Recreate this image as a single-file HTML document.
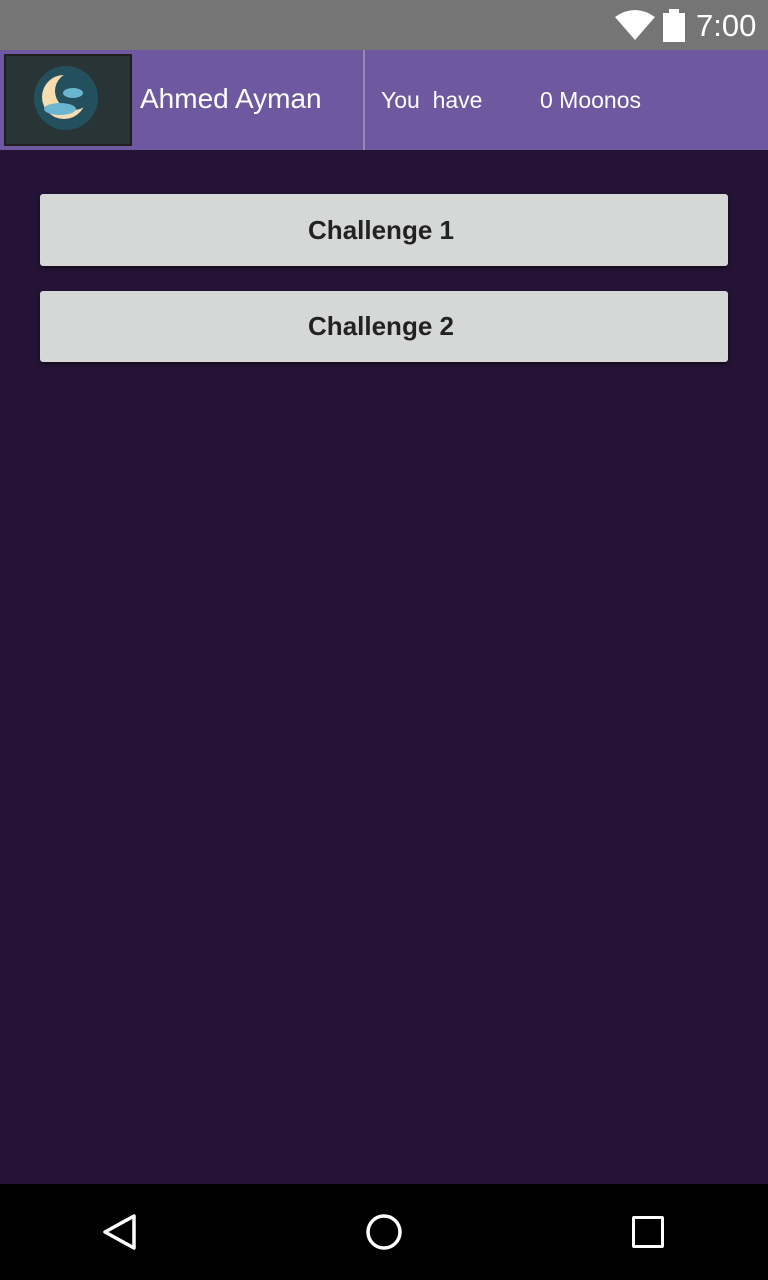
<!DOCTYPE html>
<html><head><style>
body{margin:0;width:768px;height:1280px;position:relative;background:#241335;font-family:"Liberation Sans",sans-serif;overflow:hidden}
.sb{position:absolute;left:0;top:0;width:768px;height:50px;background:#757575}
.hd{position:absolute;left:0;top:50px;width:768px;height:100px;background:#6e59a0}
.div{position:absolute;left:363px;top:50px;width:2px;height:100px;background:#9887bd}
.img{position:absolute;left:4px;top:54px;width:124px;height:88px;border:2px solid #1e1e1e;background:#283436;overflow:hidden}
.t{position:absolute;color:#fff}
.btn{position:absolute;left:40px;width:682px;padding-right:6px;background:#d6d7d7;border-radius:3px;box-shadow:0 2px 3px rgba(0,0,0,.5);text-align:center;font-size:26px;color:#222;font-weight:bold}
.nav{position:absolute;left:0;top:1184px;width:768px;height:96px;background:#000}
</style></head><body>
<div class="sb">
<svg style="position:absolute;left:615px;top:9px" width="40" height="32" viewBox="0 0 40 32"><path d="M0 8 Q20 -6 40 8 L20 31 Z" fill="#fff"/></svg>
<div style="position:absolute;left:663px;top:13px;width:22px;height:29px;background:#fff"></div>
<div style="position:absolute;left:669px;top:9px;width:10px;height:5px;background:#fff"></div>
<div class="t" style="left:696px;top:8px;font-size:31px">7:00</div>
</div>
<div class="hd"></div>
<div class="div"></div>
<div class="img">
<svg width="124" height="88" viewBox="0 0 124 88">
<circle cx="60" cy="42" r="32" fill="#24505e"/>
<circle cx="58" cy="41" r="22" fill="#f7dcb0"/>
<circle cx="68" cy="35" r="19" fill="#24505e"/>
<ellipse cx="54" cy="53" rx="16" ry="6" fill="#6ab5cf"/>
<ellipse cx="67" cy="37" rx="10" ry="5" fill="#6ab5cf"/>
</svg>
</div>
<div class="t" style="left:140px;top:83px;font-size:28px">Ahmed Ayman</div>
<div class="t" style="left:381px;top:87px;font-size:23px">You&nbsp; have</div>
<div class="t" style="left:540px;top:87px;font-size:23px">0 Moonos</div>
<div class="btn" style="top:194px;height:72px;line-height:72px">Challenge 1</div>
<div class="btn" style="top:291px;height:71px;line-height:71px">Challenge 2</div>
<div class="nav">
<svg style="position:absolute;left:100px;top:28px" width="40" height="40" viewBox="0 0 40 40"><path d="M34 4 L5 20 L34 36 Z" fill="none" stroke="#fff" stroke-width="3.5" stroke-linejoin="round"/></svg>
<svg style="position:absolute;left:364px;top:28px" width="40" height="40"><circle cx="20" cy="20" r="16" fill="none" stroke="#fff" stroke-width="3.5"/></svg>
<div style="position:absolute;left:632px;top:32px;width:26px;height:26px;border:3.5px solid #fff;border-radius:2px"></div>
</div>
</body></html>
